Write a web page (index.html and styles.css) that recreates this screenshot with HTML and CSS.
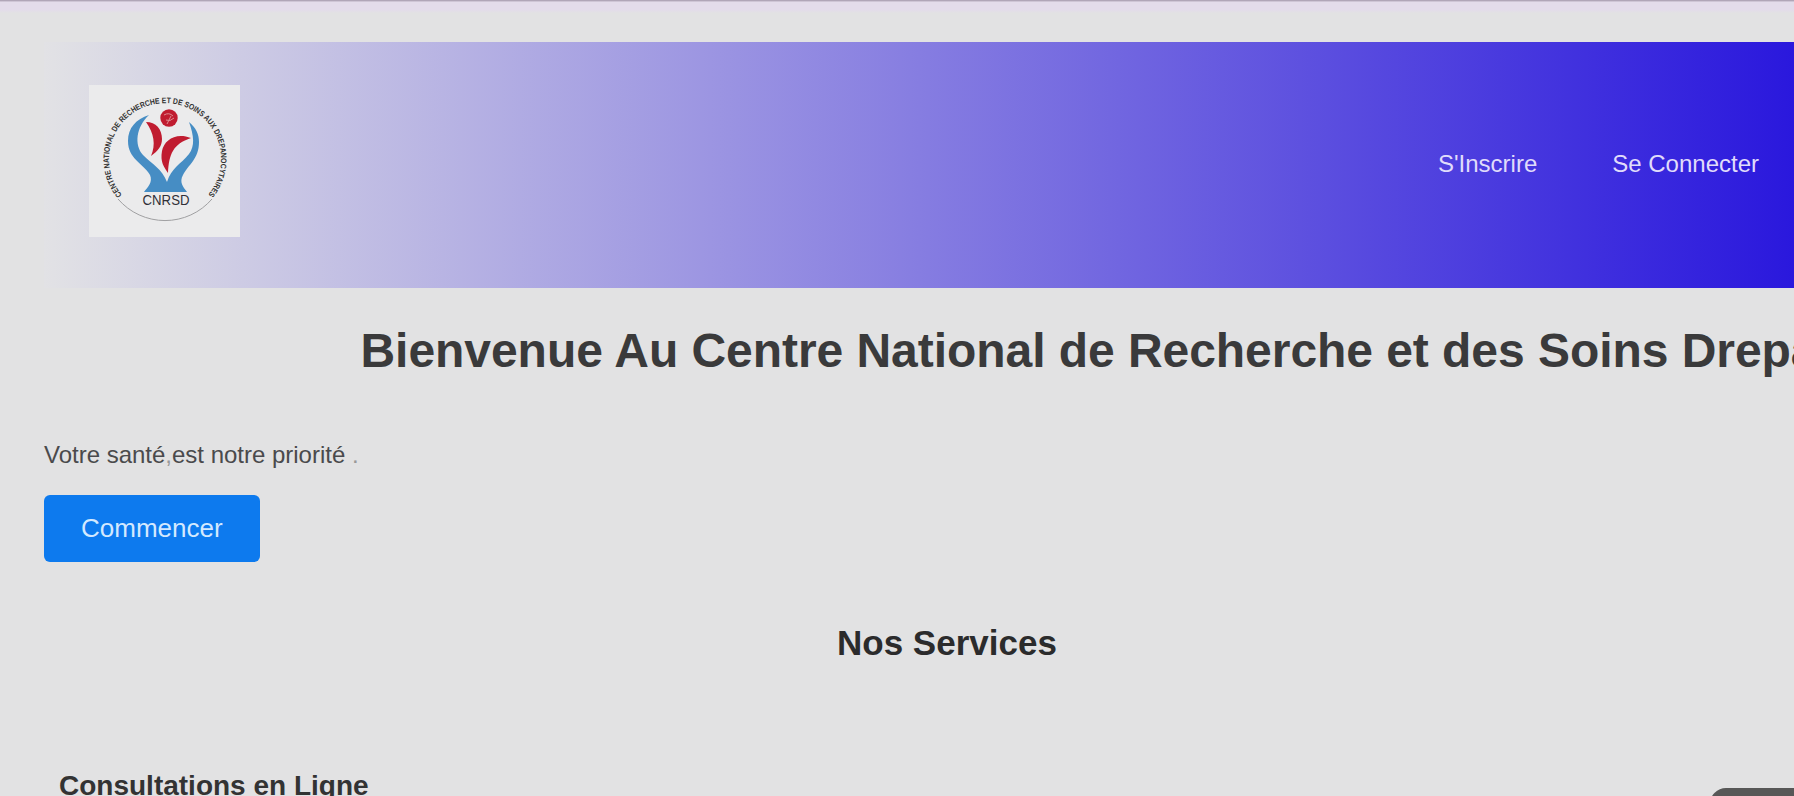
FILE: index.html
```html
<!DOCTYPE html>
<html lang="fr">
<head>
<meta charset="utf-8">
<title>CNRSD</title>
<link rel="stylesheet" href="styles.css">
</head>
<body>
<div class="page">
  <header class="header">
    <svg class="logo" viewBox="0 0 151 152">
      <defs><path id="ring" d="M33 110A56 56 0 1 1 119 110"/></defs>
      <rect class="logo-bg" width="151" height="152"/>
      <path class="logo-ring" d="M29 114A62 62 0 0 0 123 114"/>
      <text class="ring-text"><textPath href="#ring" textLength="253" lengthAdjust="spacingAndGlyphs">CENTRE NATIONAL DE RECHERCHE ET DE SOINS AUX DREPANOCYTAIRES</textPath></text>
      <path class="blue" d="M60 30C47 34 39 43 39 56C39 74 54 78 61 90C64 97 59 102 55 107H98C94 102 90 97 94 90C99 80 110 74 110 57C110 49 107 43 100 37C105 51 106 61 100 69C92 79 82 83 78 97C73 84 63 79 54 70C45 60 47 42 60 30Z"/>
      <circle class="red" cx="80" cy="33" r="8.700"/>
      <path class="shine" d="M75 30Q80 27 84 31M77 35Q81 37 85 33M78 39L82 31"/>
      <path class="red" d="M57 37C67 37 73 44 73 54C73 61 69 66 62 71C67 60 65 48 57 37Z"/>
      <path class="red" d="M102 53C87 47 75 55 73 66C71 77 75 82 79 88C80 69 84 59 102 53Z"/>
      <text class="logo-name" x="77" y="120" textLength="47" lengthAdjust="spacingAndGlyphs">CNRSD</text>
    </svg>
    <nav class="nav">
      <a class="nav-link">S'Inscrire</a>
      <a class="nav-link">Se Connecter</a>
    </nav>
  </header>
  <h1 class="title">Bienvenue Au Centre National de Recherche et des Soins Drepanocytaires</h1>
  <p class="tagline">Votre santé<span class="faint">,</span>est notre priorité <span class="faint">.</span></p>
  <a class="button">Commencer</a>
  <h2 class="section-title">Nos Services</h2>
  <h3 class="service">Consultations en Ligne</h3>
</div>
<div class="corner"></div>
</body>
</html>
```
FILE: styles.css
```css
* { box-sizing: border-box; margin: 0; }
html, body { height: 100%; overflow: hidden; }
body {
  font-family: "Liberation Sans", Arial, sans-serif;
  color: #333;
  background: #e2e2e3;
}
.page {
  height: 796px;
  padding: 42px 0 0 44px;
  overflow: hidden;
  background: linear-gradient(#a79dae 0, #b9afc0 1px, #e3dcea 2px, #e3dcea 10px, #e2e2e3 13px);
}
.header {
  display: flex;
  align-items: center;
  justify-content: space-between;
  height: 246px;
  padding: 0 35px 8px 45px;
  background: linear-gradient(90deg, #e2e2e5, #2a18dd);
}
.logo { width: 151px; height: 152px; }
.logo-bg { fill: #ebebec; }
.logo-ring { fill: none; stroke: #a0a0a2; stroke-width: 1; }
.ring-text { font-size: 8px; font-weight: bold; fill: #333; }
.blue { fill: #468dc4; }
.red { fill: #c01c30; }
.shine { fill: none; stroke: #dd8d91; stroke-width: 1; }
.logo-name { font-size: 15px; fill: #303038; text-anchor: middle; }
.nav { display: flex; gap: 75px; padding-top: 6px; }
.nav-link { font-size: 24px; line-height: 28px; color: #e0dcfb; }
.title {
  padding-left: 316.5px;
  font-size: 48px;
  line-height: 60px;
  margin-top: 33px;
  white-space: nowrap;
  color: #3a3a3b;
  letter-spacing: -0.05px;
}
.tagline {
  margin-top: 60px;
  font-size: 24px;
  line-height: 28px;
  color: #4a4a4c;
  letter-spacing: -0.01px;
}
.faint { color: #999; }
.button {
  display: block;
  width: 216px;
  margin-top: 26px;
  padding-left: 37px;
  font-size: 26px;
  line-height: 67px;
  border-radius: 6px;
  color: #d3e9ff;
  background: #0d7aee;
}
.section-title {
  margin-top: 61px;
  padding-left: 793px;
  font-size: 35px;
  line-height: 40px;
  color: #2b2b2c;
}
.service {
  margin-top: 107px;
  padding-left: 15px;
  font-size: 28px;
  line-height: 32px;
  color: #333;
}
.corner {
  position: absolute;
  right: 0;
  bottom: 0;
  width: 84px;
  height: 8px;
  overflow: hidden;
}
.corner::before {
  content: "";
  display: block;
  height: 40px;
  border-radius: 16px 0 0 0;
  background: #575757;
}
```
